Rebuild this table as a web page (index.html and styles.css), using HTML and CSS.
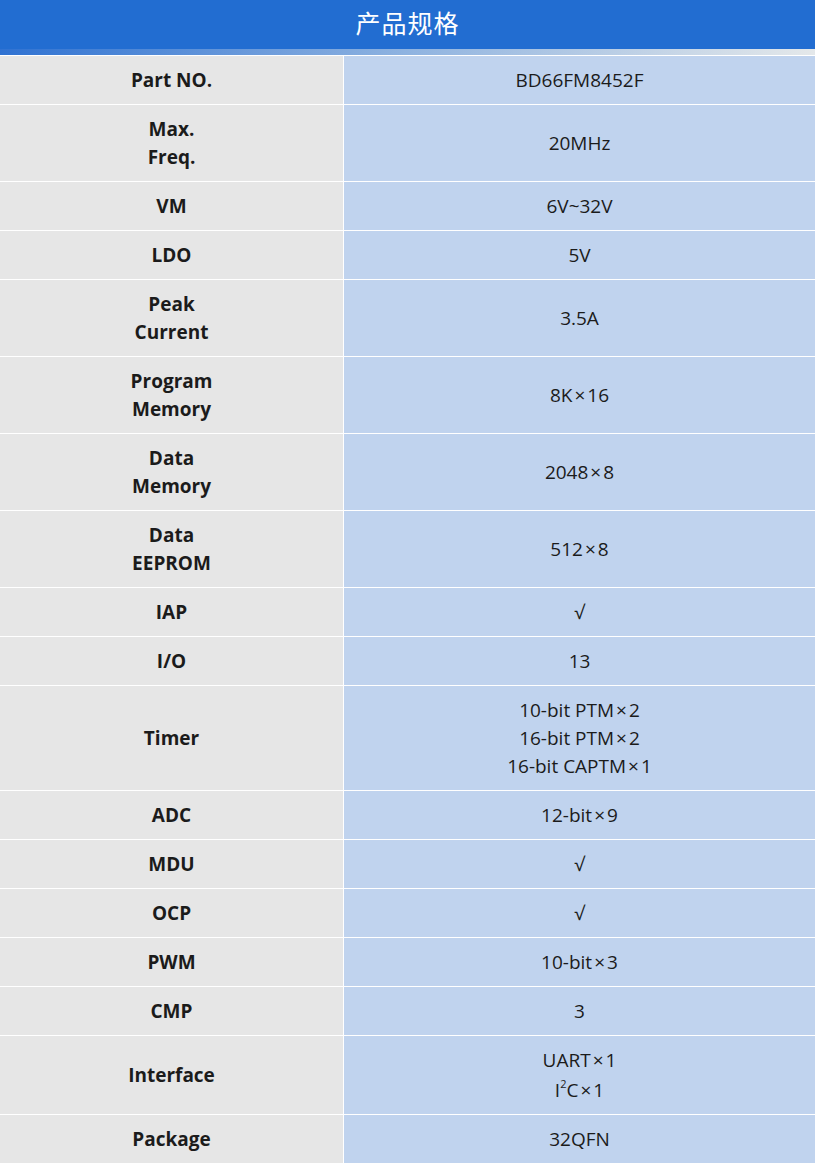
FILE: index.html
```html
<!DOCTYPE html>
<html lang="zh">
<head>
<meta charset="utf-8">
<title>产品规格</title>
<link rel="stylesheet" href="styles.css">
</head>
<body>
<div class="page">
  <header class="title">
    <div class="title-bar">产品规格</div>
    <div class="title-fade"></div>
  </header>
  <div class="spec">
    <div class="k"><span>Part NO.</span></div><div class="v"><span>BD66FM8452F</span></div>
    <div class="k"><span>Max.<br>Freq.</span></div><div class="v"><span>20MHz</span></div>
    <div class="k"><span>VM</span></div><div class="v"><span>6V~32V</span></div>
    <div class="k"><span>LDO</span></div><div class="v"><span>5V</span></div>
    <div class="k"><span>Peak<br>Current</span></div><div class="v"><span>3.5A</span></div>
    <div class="k"><span>Program<br>Memory</span></div><div class="v"><span>8K<span class="x">×</span>16</span></div>
    <div class="k"><span>Data<br>Memory</span></div><div class="v"><span>2048<span class="x">×</span>8</span></div>
    <div class="k"><span>Data<br>EEPROM</span></div><div class="v"><span>512<span class="x">×</span>8</span></div>
    <div class="k"><span>IAP</span></div><div class="v"><span>√</span></div>
    <div class="k"><span>I/O</span></div><div class="v"><span>13</span></div>
    <div class="k"><span>Timer</span></div><div class="v"><span>10-bit PTM<span class="x">×</span>2<br>16-bit PTM<span class="x">×</span>2<br>16-bit CAPTM<span class="x">×</span>1</span></div>
    <div class="k"><span>ADC</span></div><div class="v"><span>12-bit<span class="x">×</span>9</span></div>
    <div class="k"><span>MDU</span></div><div class="v"><span>√</span></div>
    <div class="k"><span>OCP</span></div><div class="v"><span>√</span></div>
    <div class="k"><span>PWM</span></div><div class="v"><span>10-bit<span class="x">×</span>3</span></div>
    <div class="k"><span>CMP</span></div><div class="v"><span>3</span></div>
    <div class="k"><span>Interface</span></div><div class="v"><span>UART<span class="x">×</span>1<br>I<sup>2</sup>C<span class="x">×</span>1</span></div>
    <div class="k"><span>Package</span></div><div class="v"><span>32QFN</span></div>
  </div>
</div>
</body>
</html>
```
FILE: styles.css
```css
* { box-sizing: border-box; }
html, body { margin: 0; padding: 0; background: #ffffff; }
body {
  font-family: "Open Sans", "Noto Sans CJK SC", sans-serif;
  color: #1b1b1b;
}
.page { width: 815px; }
.title-bar {
  height: 49px;
  background: #226dd1;
  color: #ffffff;
  font-size: 25px;
  line-height: 45px;
  text-align: center;
  font-family: "Noto Sans CJK SC", sans-serif;
  letter-spacing: 1px;
}
.title-fade {
  height: 6px;
  background: linear-gradient(90deg, #2f72d2 0%, #8fb3e0 50%, #e4e8ea 100%);
}
.spec {
  display: grid;
  grid-template-columns: 343px 1fr;
  gap: 1px;
  padding-top: 1px;
  background: #ffffff;
}
.k, .v {
  display: flex;
  align-items: center;
  justify-content: center;
  text-align: center;
  padding: 10px 8px;
  font-size: 19px;
  line-height: 28px;
}
.k { background: #e6e6e6; font-weight: 700; }
.v { background: #c0d3ee; }
.v .x { margin: 0 2px; }
.v sup { font-size: 11px; line-height: 20px; vertical-align: 9px; }
```
